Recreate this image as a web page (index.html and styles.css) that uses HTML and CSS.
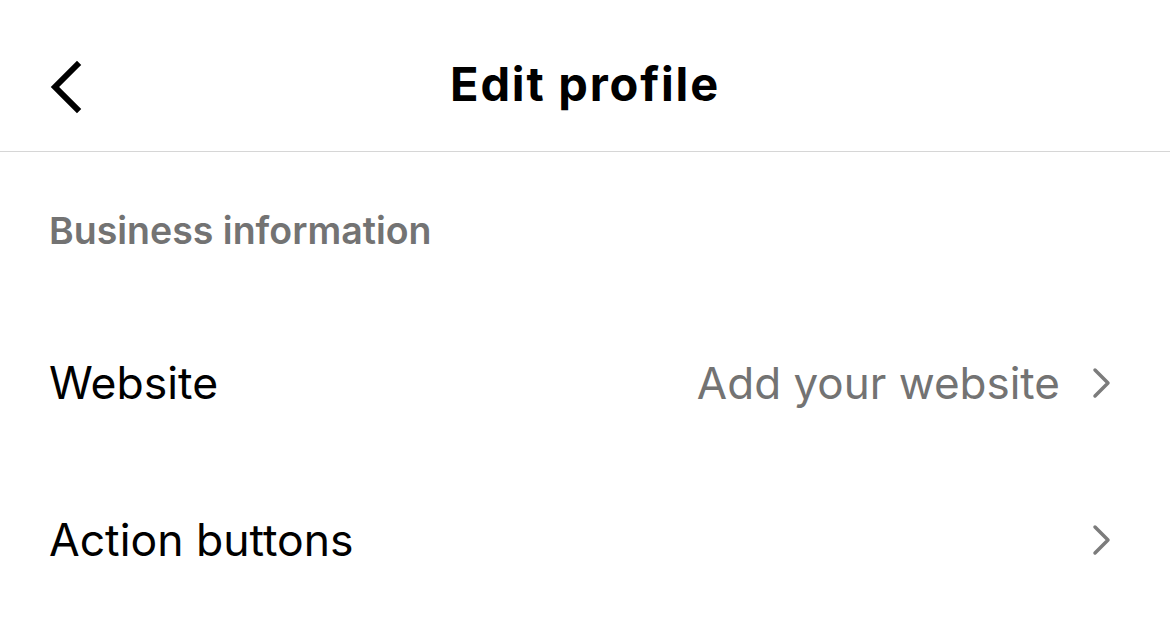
FILE: index.html
```html
<!DOCTYPE html>
<html>
  <head>
    <meta charset="utf-8">
    <title>Edit profile</title>
    <link rel="stylesheet" href="styles.css">
  </head>
  <body>
    <header class="topbar">
      <button class="back" aria-label="Back">
        <svg width="40" height="56" viewBox="0 0 40 56">
          <path d="M32 6 L10 28 L32 50" fill="none" stroke="#000" stroke-width="6" stroke-linecap="square" stroke-linejoin="miter"/>
        </svg>
      </button>
      <h1 class="title">Edit profile</h1>
    </header>

    <section class="group">
      <h2 class="group-title">Business information</h2>

      <div class="row first">
        <span class="row-label">Website</span>
        <span class="row-value">Add your website</span>
        <svg class="chev" width="24" height="36" viewBox="0 0 24 36">
          <path d="M5 5 L18 18 L5 31" fill="none" stroke="#7c7c7c" stroke-width="3.5" stroke-linecap="round" stroke-linejoin="round"/>
        </svg>
      </div>

      <div class="row">
        <span class="row-label">Action buttons</span>
        <span class="row-value"></span>
        <svg class="chev" width="24" height="36" viewBox="0 0 24 36">
          <path d="M5 5 L18 18 L5 31" fill="none" stroke="#7c7c7c" stroke-width="3.5" stroke-linecap="round" stroke-linejoin="round"/>
        </svg>
      </div>
    </section>
  </body>
</html>
```

FILE: styles.css
```css
body {
  margin: 0;
  background: #fff;
  font-family: Inter, "Noto Sans", sans-serif;
  color: #000;
}
.topbar {
  position: relative;
  height: 135px;
  padding-top: 16px;
  border-bottom: 1.5px solid #d6d6d6;
  display: flex;
  align-items: center;
  justify-content: center;
}
.back {
  position: absolute;
  left: 45px;
  top: 59px;
  padding: 0;
  border: none;
  background: none;
}
.back svg {
  display: block;
}
.title {
  margin: 0;
  font-size: 47px;
  font-weight: 700;
  letter-spacing: 1.8px;
}
.group {
  padding: 0 56px 0 49px;
}
.group-title {
  margin: 0;
  padding-top: 56px;
  height: 46px;
  font-size: 37.5px;
  font-weight: 600;
  color: #737373;
}
.row {
  display: flex;
  align-items: center;
  height: 157px;
}
.row.first {
  margin-top: 50px;
}
.row-label {
  flex: 1;
  font-size: 44.5px;
  font-weight: 400;
}
.row-value {
  font-size: 44px;
  color: #737373;
  margin-right: 30px;
}
.chev {
  display: block;
}
```
